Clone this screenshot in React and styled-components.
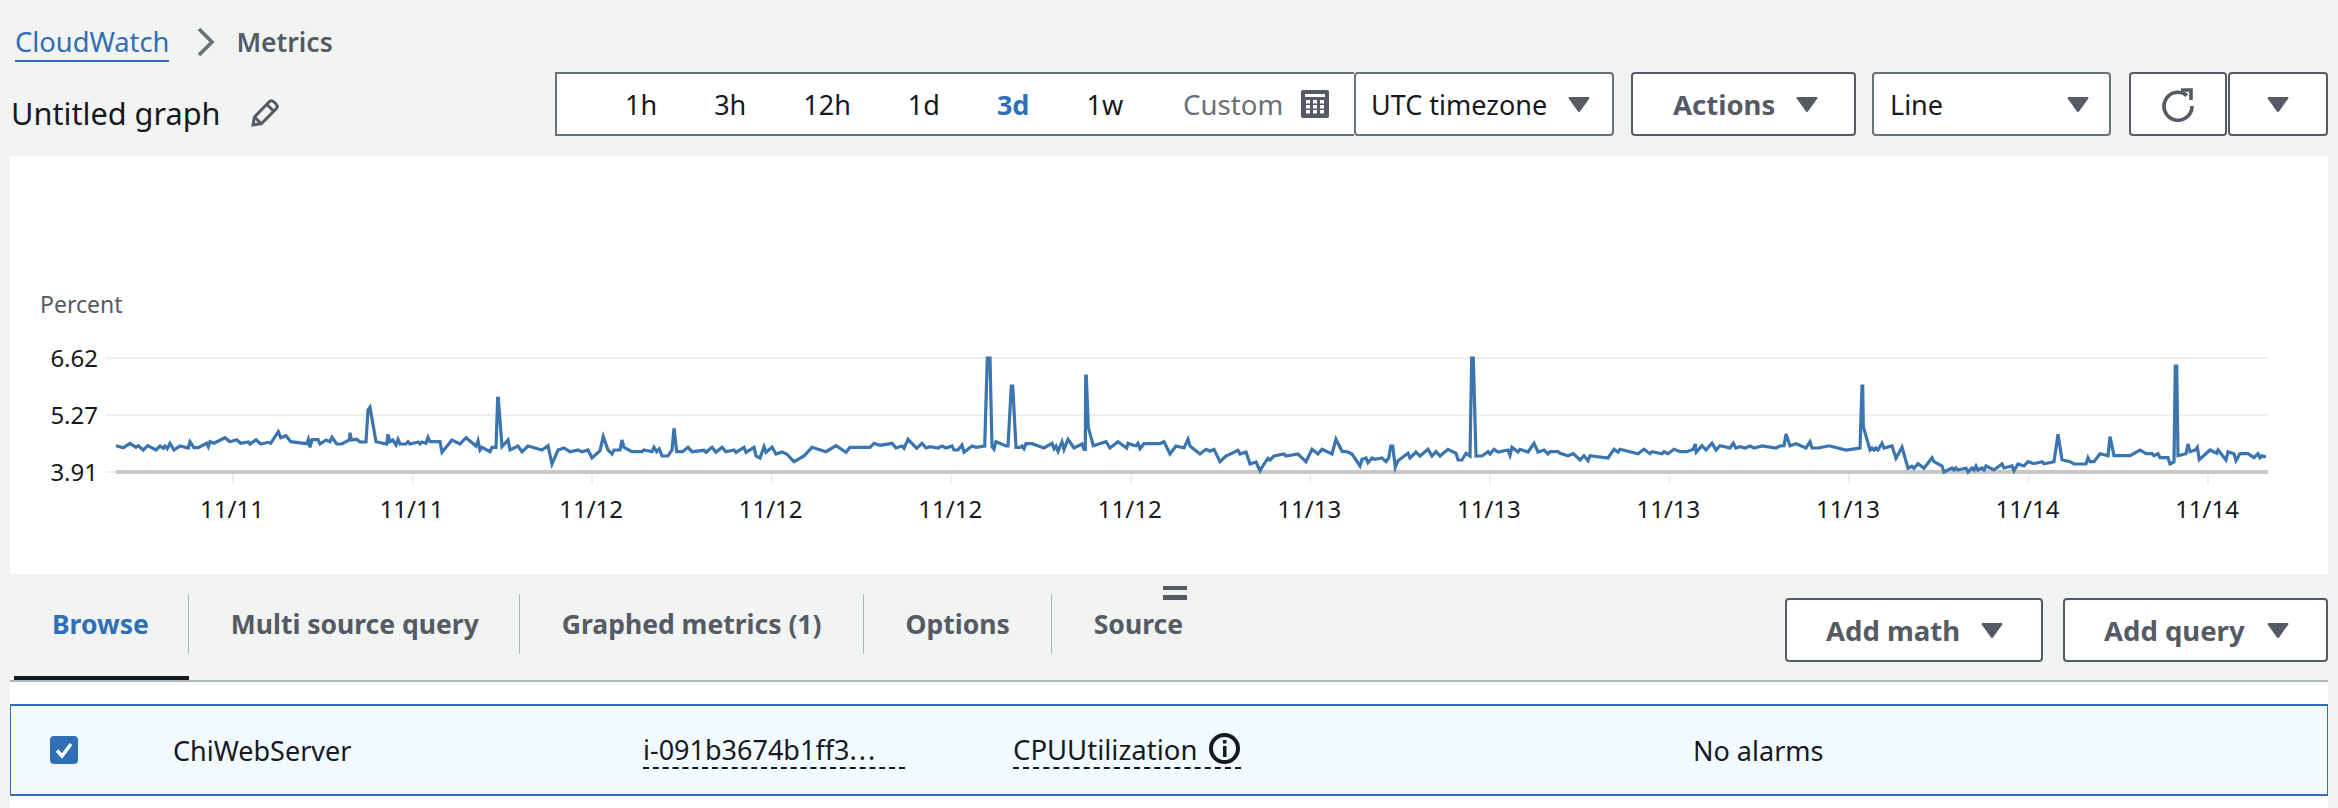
import React from "react";
import styled, { createGlobalStyle } from "styled-components";

const Global = createGlobalStyle`
  html, body { margin: 0; padding: 0; background: #f2f3f3; }
  body { font-family: "Noto Sans", "Open Sans", sans-serif; color: #16191f; }
`;

const Page = styled.div`
  width: 2338px;
  height: 808px;
  box-sizing: border-box;
  padding: 0 10px;
  display: flex;
  flex-direction: column;
  overflow: hidden;
`;

const Breadcrumbs = styled.nav`
  display: flex;
  align-items: center;
  height: 40px;
  margin-top: 22px;
  padding-left: 5px;
  font-size: 27.3px;
`;

const Crumb = styled.a`
  color: #2f6fb7;
  line-height: 36px;
  border-bottom: 2px solid #2f6fb7;
  margin-top: 2px;
`;

const Separator = styled.svg`
  width: 20px;
  height: 28px;
  margin: 0 20px 0 27px;
  fill: none;
  stroke: #687078;
  stroke-width: 3.6;
`;

const Current = styled.span`
  color: #545b64;
  font-weight: 600;
  font-size: 26.5px;
`;

const Toolbar = styled.div`
  display: flex;
  align-items: flex-start;
  margin-top: 10px;
  height: 64px;
`;

const TitleBlock = styled.div`
  display: flex;
  align-items: center;
  height: 82px;
  margin-left: 1px;
  font-size: 30.7px;
  gap: 29px;
`;

const PencilIcon = styled.svg`
  width: 30px;
  height: 30px;
  fill: none;
  stroke: #545b64;
  stroke-width: 3;
`;

const Controls = styled.div`
  margin-left: auto;
  display: flex;
  align-items: stretch;
  height: 64px;
`;

const RangeBox = styled.div`
  display: flex;
  align-items: center;
  width: 799px;
  box-sizing: border-box;
  padding-left: 68px;
  background: #fff;
  border: 2px solid #687078;
  border-right: none;
  font-size: 27px;
`;

const Range = styled.span`
  margin-right: 57px;
  color: ${(p) => (p.$active ? "#2f6fb7" : "#16191f")};
  font-weight: ${(p) => (p.$active ? 700 : 400)};
`;

const Custom = styled.span`
  color: #687078;
  font-size: 27.6px;
  margin-left: 3px;
  margin-right: 18px;
`;

const CalendarIcon = styled.svg`
  width: 28px;
  height: 28px;
`;

const Button = styled.div`
  display: flex;
  align-items: center;
  box-sizing: border-box;
  width: ${(p) => p.$w}px;
  margin-left: ${(p) => p.$ml || 0}px;
  padding: 0 ${(p) => p.$pr || 0}px 0 ${(p) => p.$pl || 0}px;
  justify-content: ${(p) => (p.$center ? "center" : "space-between")};
  background: #fff;
  border: 2px solid #687078;
  border-radius: 4px;
  font-size: 27px;
  color: #16191f;
`;

const StrongButton = styled(Button)`
  border-color: #545b64;
  color: #545b64;
  font-size: 27.5px;
  font-weight: 700;
`;

const Caret = styled.svg`
  width: 22px;
  height: 17px;
  fill: #545b64;
  flex: none;
`;

const RefreshIcon = styled.svg`
  width: 36px;
  height: 36px;
  fill: none;
  stroke: #545b64;
  stroke-width: 3.6;
`;

const ChartPanel = styled.section`
  margin-top: 20px;
  height: 418px;
  background: #fff;
`;

const ChartSvg = styled.svg`
  display: block;
  width: 2318px;
  height: 418px;
`;

const AxisText = styled.text`
  font-family: "Noto Sans", sans-serif;
  font-size: 24px;
  fill: #16191f;
`;

const UnitText = styled(AxisText)`
  fill: #545b64;
  font-size: 23px;
`;

const TabBar = styled.div`
  display: flex;
  height: 108px;
  box-sizing: border-box;
  border-bottom: 2px solid #aab7b8;
  padding-left: 4px;
`;

const Tab = styled.div`
  position: relative;
  padding-top: 20px;
  box-sizing: border-box;
  border-bottom: 4px solid ${(p) => (p.$active ? "#16191f" : "transparent")};
`;

const TabLabel = styled.div`
  display: flex;
  align-items: center;
  height: 60px;
  padding: 0 ${(p) => p.$pr || 41}px 0 ${(p) => p.$pl || 42}px;
  font-size: 26.5px;
  font-weight: 700;
  color: ${(p) => (p.$active ? "#2f6fb7" : "#545b64")};
  border-right: ${(p) => (p.$last ? "none" : "1px solid #aab7b8")};
`;

const DragHandle = styled.div`
  position: absolute;
  left: 111px;
  top: 12px;
  width: 24px;
  height: 14px;
  box-sizing: border-box;
  border-top: 4px solid #545b64;
  border-bottom: 5px solid #545b64;
`;

const TabActions = styled.div`
  margin-left: auto;
  display: flex;
  gap: 20px;
  height: 64px;
  margin-top: 24px;
`;

const Results = styled.div`
  flex: 1;
  background: #fff;
  padding-top: 22px;
`;

const Row = styled.div`
  display: grid;
  grid-template-columns: 123px 470px 370px 680px 1fr;
  align-items: center;
  height: 92px;
  box-sizing: border-box;
  padding-left: 39px;
  background: #f1faff;
  border: 2px solid #2f6fb7;
  border-left-width: 1px;
  border-right-width: 1px;
  font-size: 27px;
`;

const Checkbox = styled.div`
  width: 28px;
  height: 28px;
  border-radius: 4px;
  background: #2f6fb7;
  display: flex;
  align-items: center;
  justify-content: center;
`;

const CheckMark = styled.svg`
  width: 20px;
  height: 20px;
  fill: none;
  stroke: #fff;
  stroke-width: 3.4;
`;

const Dotted = styled.span`
  display: inline-flex;
  align-items: center;
  gap: 11px;
  font-size: 27.5px;
  line-height: 34px;
  border-bottom: 2px dashed #16191f;
`;

const IdDotted = styled(Dotted)`
  width: 262px;
  gap: 0;
  font-size: 27px;
`;

const Ellipsis = styled.span`
  letter-spacing: 2px;
`;

const InfoIcon = styled.svg`
  width: 33px;
  height: 33px;
  margin-bottom: 2px;
  flex: none;
`;

const strips = [
  [110, "18,167 40,173 60,160 78,172 85,167 100,180 113,167 138,180 150,168 160,175 165,168 172,176 180,160 192,180 210,168 235,174 240,155 252,173 265,173 290,160 295,170 300,155 312,160 345,143 360,155 380,149 392,160 415,156 420,162 438,149 452,162 475,157 482,160 505,125 512,143 528,137 542,155 590,161 595,148 600,172 606,149 624,149 630,162 648,150 660,155 666,142 680,162 695,162 718,150 720,128 724,150 740,148 750,156 768,156 774,60 780,52 798,155 830,162 834,133 840,155 848,150 858,165 864,148 870,162 888,162 894,155 900,162 925,156 930,162 936,156 948,160 954,142 960,155 990,155 996,187 1026,150 1050,162 1068,143 1098,168 1104,152 1110,180 1116,172 1140,185 1146,172 1158,172 1163,25 1165,25 1176,170 1194,150 1200,180 1224,168 1236,185 1254,168 1296,180"],
  [540, "24,167 36,222 54,180 72,174 90,185 114,180 126,185 144,180 156,204 180,182 190,140 204,180 216,192 222,180 240,180 246,150 252,172 276,185 306,185 312,180 336,185 342,172 350,185 358,177 366,198 384,198 396,180 402,115 410,185 428,185 444,172 456,185 492,181 498,187 516,172 528,187 546,172 558,185 582,180 588,187 612,172 618,187 642,172 648,198 660,204 672,170 678,187 696,172 708,192 726,186 740,192 762,215 792,198 816,172 858,185 888,167 918,187 930,172 990,172 1002,160 1020,166 1056,160 1068,174 1086,168 1092,175 1104,148 1130,175 1146,160 1158,174 1170,170 1194,174 1206,168 1218,174 1236,168 1242,180 1254,180 1266,165 1272,187 1296,168"],
  [970, "18,172 44,168 52,-96 60,-96 66,170 72,178 78,155 108,168 114,168 124,-12 128,-12 138,172 150,172 156,168 162,176 168,161 186,161 222,174 246,160 252,176 258,168 264,184 276,155 282,178 294,148 312,174 336,162 342,178 346,178 347,-42 349,-42 355,112 370,167 408,155 420,174 444,155 470,174 474,160 490,166 498,167 504,160 510,176 522,161 570,161 582,155 600,192 618,168 642,174 654,148 660,168 690,192 708,178 720,184 732,178 750,215 768,198 804,181 810,192 828,186 840,222 858,216 870,242 882,222 894,205 900,210 912,198 942,192 948,198 984,192 1008,215 1026,178 1044,192 1056,178 1086,192 1098,148 1116,184 1122,184 1134,186 1146,192 1170,228 1176,208 1188,204 1194,218 1206,204 1214,208 1236,204 1248,215 1256,204 1262,168 1268,168 1276,232 1284,212"],
  [1400, "24,190 30,204 48,186 60,198 84,178 96,198 108,185 120,198 144,178 168,190 174,210 186,210 198,190 210,198 215,-96 220,-96 228,198 246,198 264,185 270,192 282,178 294,186 324,180 330,196 336,172 354,186 360,178 384,186 402,160 414,186 432,180 444,192 450,185 474,185 480,190 504,197 520,191 540,210 552,197 564,212 570,197 624,204 642,178 654,186 660,178 714,191 732,178 750,191 756,185 786,191 792,185 804,191 822,178 840,185 860,185 880,178 886,162 889,186 906,167 918,180 936,160 948,180 960,167 990,174 1000,160 1008,174 1020,170 1035,174 1050,168 1062,174 1086,168 1128,174 1140,168 1152,167 1158,132 1170,167 1188,161 1218,174 1230,155 1236,174 1254,174 1285,168"],
  [1830, "0,168 48,180 90,174 96,-12 98,-12 100,110 120,180 126,174 132,180 138,174 144,180 156,160 162,174 186,168 198,205 216,172 234,235 246,229 252,235 264,221 282,235 306,203 312,215 336,228 342,246 366,234 372,240 378,234 384,240 408,234 414,246 426,234 432,240 438,228 444,240 456,234 462,240 468,228 492,240 516,222 522,234 546,228 552,242 564,222 582,228 594,215 612,221 636,215 642,221 672,215 684,133 696,209 720,215 732,222 768,222 774,203 780,215 792,215 810,191 834,197 840,140 852,197 900,197 930,180 948,191 966,191 972,197 984,191 990,203 1014,203 1020,222 1032,216 1036,-72 1040,-72 1044,197 1068,191 1074,162 1080,185 1096,180 1102,172 1108,209 1140,180 1160,190 1164,180 1188,210 1194,185 1212,191 1218,212 1230,191 1254,191 1272,203 1284,191 1290,203 1296,197 1302,200 1308,198"],
];

const linePoints = strips
  .flatMap(([x0, s]) =>
    s.split(" ").map((pair) => {
      const [zx, zy] = pair.split(",").map(Number);
      return `${(x0 + zx / 3).toFixed(1)},${(390 + zy / 3).toFixed(1)}`;
    })
  )
  .join(" ");

const dates = ["11/11", "11/11", "11/12", "11/12", "11/12", "11/12", "11/13", "11/13", "11/13", "11/13", "11/14", "11/14"];
const yTicks = [["6.62", 358], ["5.27", 415], ["3.91", 472]];

const Chart = () => (
  <ChartSvg viewBox="10 156 2318 418">
    <UnitText x="40" y="313">Percent</UnitText>
    {yTicks.map(([label, y]) => (
      <g key={label}>
        <AxisText x="98" y={y + 9} textAnchor="end">{label}</AxisText>
        <line x1="106" x2="2268" y1={y} y2={y} stroke="#eeeeee" strokeWidth="2" />
      </g>
    ))}
    <line x1="116" x2="2268" y1="472" y2="472" stroke="#c8c8c8" strokeWidth="4" />
    {dates.map((d, i) => {
      const x = 232 + 179.55 * i;
      return (
        <g key={i}>
          <line x1={x + 1} x2={x + 1} y1="474" y2="484" stroke="#eeeeee" strokeWidth="2" />
          <AxisText x={x} y="518" textAnchor="middle">{d}</AxisText>
        </g>
      );
    })}
    <polyline points={linePoints} fill="none" stroke="#3a75b0" strokeWidth="3.2" strokeLinejoin="miter" />
  </ChartSvg>
);

const CaretDown = () => (
  <Caret viewBox="0 0 22 17">
    <path d="M1.5 1h19c.8 0 1.2.8.8 1.4L12 15.6c-.5.6-1.500.6-2 0L.7 2.400C.3 1.800.7 1 1.500 1z" />
  </Caret>
);

export default function App() {
  return (
    <Page>
      <Global />
      <Breadcrumbs>
        <Crumb>CloudWatch</Crumb>
        <Separator viewBox="0 0 20 28"><path d="M3 1l13 13L3 27" /></Separator>
        <Current>Metrics</Current>
      </Breadcrumbs>
      <Toolbar>
        <TitleBlock>
          <span>Untitled graph</span>
          <PencilIcon viewBox="0 0 30 30">
            <path d="M3 27l1.500-8L19 4c1.500-1.500 3.500-1.500 5 0l2 2c1.500 1.500 1.500 3.500 0 5L11.500 25.500z" />
            <path d="M4.500 19l6.500 6.500M17 6.500l6.500 6.500" />
          </PencilIcon>
        </TitleBlock>
        <Controls>
          <RangeBox>
            <Range>1h</Range>
            <Range>3h</Range>
            <Range>12h</Range>
            <Range>1d</Range>
            <Range $active>3d</Range>
            <Range>1w</Range>
            <Custom>Custom</Custom>
            <CalendarIcon viewBox="0 0 28 28">
              <rect x="0" y="0" width="28" height="28" rx="2" fill="#545b64" />
              <rect x="4" y="4" width="20" height="3" fill="#fff" />
              {[5, 12, 19].flatMap((x) =>
                [10, 15, 20].map((y) => <rect key={`${x}-${y}`} x={x} y={y} width="4" height="3.500" fill="#fff" />)
              )}
            </CalendarIcon>
          </RangeBox>
          <Button $w={260} $pl={15} $pr={22}>UTC timezone<CaretDown /></Button>
          <StrongButton $w={225} $ml={17} $pl={40} $pr={36}>Actions<CaretDown /></StrongButton>
          <Button $w={239} $ml={16} $pl={16} $pr={20}>Line<CaretDown /></Button>
          <StrongButton $w={98} $ml={18} $center>
            <RefreshIcon viewBox="0 0 36 36">
              <path d="M27 9.500A14 14 0 1 0 32 20" />
              <path d="M21 4h10v10" />
            </RefreshIcon>
          </StrongButton>
          <StrongButton $w={100} $ml={1} $center><CaretDown /></StrongButton>
        </Controls>
      </Toolbar>
      <ChartPanel><Chart /></ChartPanel>
      <TabBar>
        <Tab $active><TabLabel $active $pl={38} $pr={39}>Browse</TabLabel></Tab>
        <Tab><TabLabel $pr={40}>Multi source query</TabLabel></Tab>
        <Tab><TabLabel>Graphed metrics (1)</TabLabel></Tab>
        <Tab><TabLabel>Options</TabLabel></Tab>
        <Tab><DragHandle /><TabLabel $last>Source</TabLabel></Tab>
        <TabActions>
          <StrongButton $w={258} $pl={39} $pr={38}>Add math<CaretDown /></StrongButton>
          <StrongButton $w={265} $pl={39} $pr={37}>Add query<CaretDown /></StrongButton>
        </TabActions>
      </TabBar>
      <Results>
        <Row>
          <Checkbox>
            <CheckMark viewBox="0 0 20 20"><path d="M3 10.500l5 5.500 9-12" /></CheckMark>
          </Checkbox>
          <span>ChiWebServer</span>
          <span><IdDotted>i-091b3674b1ff3<Ellipsis>...</Ellipsis></IdDotted></span>
          <span>
            <Dotted>
              CPUUtilization
              <InfoIcon viewBox="0 0 33 33">
                <circle cx="16.500" cy="16.500" r="13.500" fill="none" stroke="#16191f" strokeWidth="4" />
                <rect x="15" y="14" width="3.500" height="11" fill="#16191f" />
                <rect x="15" y="8" width="3.500" height="3.500" fill="#16191f" />
              </InfoIcon>
            </Dotted>
          </span>
          <span>No alarms</span>
        </Row>
      </Results>
    </Page>
  );
}
